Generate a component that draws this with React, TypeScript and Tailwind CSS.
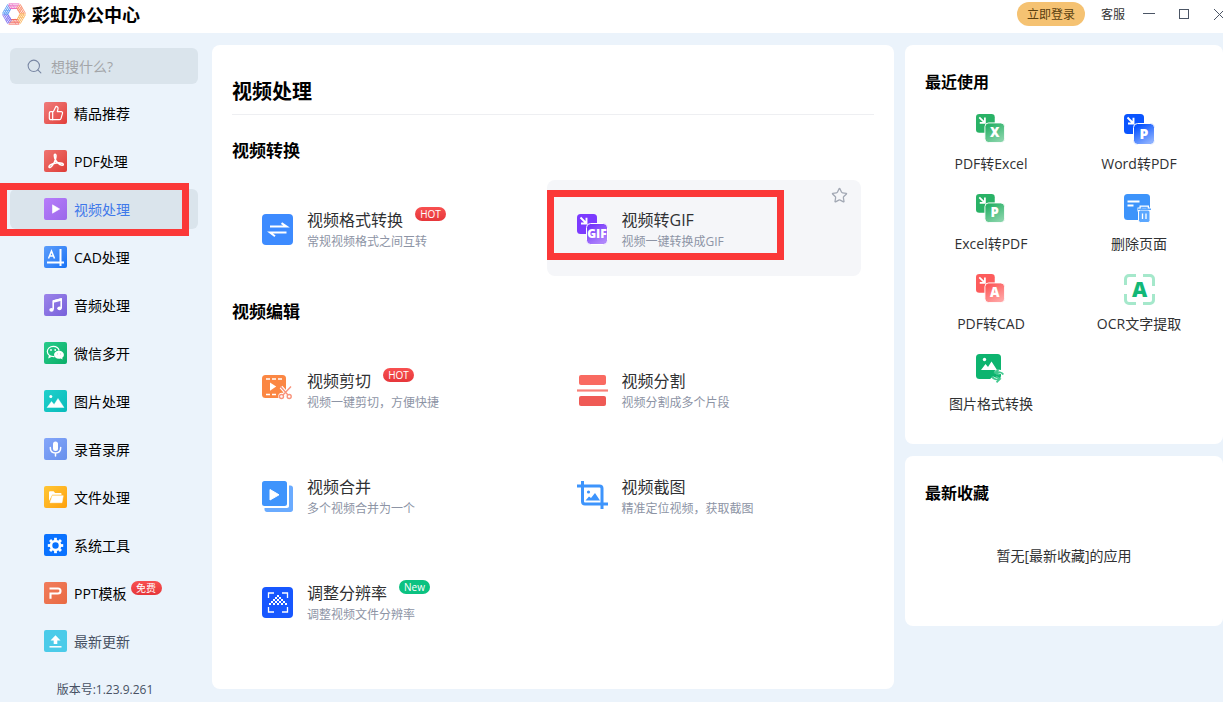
import type { ReactNode } from "react";
import { Search, Star, ThumbsUp } from "lucide-react";

/* ---------- Logo ---------- */

function Logo() {
  const sides = ["#f2695f", "#7f6ff0", "#5b9df5", "#e86fc4", "#f98a6a", "#fbb45c"];
  return (
    <svg width="24" height="24" viewBox="-12 -12 24 24" fill="none">
      {sides.map((color, index) => (
        <g key={color} transform={`rotate(${index * 60})`} stroke={color} strokeLinecap="round">
          <path d="M-3 5.5H4" strokeWidth="1" />
          <path d="M-3.5 7.1H5" strokeWidth="0.9" />
          <path d="M-4.5 8.7H5.5" strokeWidth="0.9" />
          <path d="M-5 10.2H4.6" strokeWidth="0.8" />
          <path d="M5 10.2L1.5 5M2 10.2L-1 5.5" strokeWidth="0.5" />
        </g>
      ))}
    </svg>
  );
}

/* ---------- Sidebar glyphs (23 x 22) ---------- */

function Glyph({ children }: { children: ReactNode }) {
  return (
    <svg width="23" height="22" viewBox="0 0 23 22" fill="none" stroke="white">
      {children}
    </svg>
  );
}

const pdfGlyph = (
  <Glyph>
    <path
      d="M11 4.2c1.6 0 1 3.2.4 5.2-.9 3-3.4 7.6-5.3 8-1.5.3-1.6-1.3.2-2.5 3-2 8.5-2.800 11.8-1.7 1.900.7 1.500 2.200-.1 2.100-3-.2-6.300-4-7.200-7C10.300 6.500 10 4.200 11 4.200z"
      strokeWidth="1.5"
      strokeLinejoin="round"
    />
  </Glyph>
);

const playGlyph = (
  <Glyph>
    <path d="M8.5 6.8v8.4L15.6 11z" fill="white" strokeWidth="0.6" strokeLinejoin="round" />
  </Glyph>
);

const cadGlyph = (
  <Glyph>
    <path d="M4.5 12.5L7.5 5l3 7.5M5.6 10h3.9" strokeWidth="1.5" />
    <path d="M3 16.5h17M16.5 3v17" strokeWidth="2" />
  </Glyph>
);

const musicGlyph = (
  <Glyph>
    <path d="M9.2 15.5V7l8-2v9" strokeWidth="1.6" />
    <path d="M9.2 7.5l8-2" strokeWidth="2.5" />
    <ellipse cx="7.5" cy="15.8" rx="2.2" ry="1.9" fill="white" stroke="none" />
    <ellipse cx="15.5" cy="14.3" rx="2.2" ry="1.9" fill="white" stroke="none" />
  </Glyph>
);

const wechatGlyph = (
  <Glyph>
    <path d="M5.5 13.5L5 15.6l2.6-1.3" strokeWidth="1.1" />
    <path d="M10.5 14.6c-4 .4-7.2-2-7.2-5C3.3 6.7 6 4.4 9.2 4.4c3 0 5.3 1.7 5.9 4.1" strokeWidth="1.2" />
    <circle cx="7" cy="8" r="0.9" fill="white" stroke="none" />
    <circle cx="11.2" cy="8" r="0.9" fill="white" stroke="none" />
    <path
      d="M15 8.7c-3 0-5 1.8-5 4s2 4.1 5 4.1c.6 0 1.2-.1 1.7-.3l1.9 1-.4-1.7c1.1-.8 1.7-1.9 1.7-3.1 0-2.2-2-4-4.9-4z"
      fill="white"
      stroke="none"
    />
    <circle cx="13.3" cy="11.9" r="0.4" fill="#12b877" stroke="none" />
    <circle cx="16.7" cy="11.9" r="0.4" fill="#12b877" stroke="none" />
  </Glyph>
);

const imageGlyph = (
  <Glyph>
    <circle cx="6.8" cy="6.5" r="1.5" fill="white" stroke="none" />
    <path d="M3 17.5L7.5 11.5l2.6 3L14 8.5l6 9z" fill="white" strokeWidth="0.4" strokeLinejoin="round" />
  </Glyph>
);

const micGlyph = (
  <Glyph>
    <rect x="9" y="3.5" width="5" height="9.5" rx="2.5" fill="white" stroke="none" />
    <path
      d="M6.3 9.5c0 3.5 2.2 5.5 5.2 5.5s5.2-2 5.2-5.5M11.5 15v3"
      strokeWidth="1.5"
      strokeLinecap="round"
    />
  </Glyph>
);

const folderGlyph = (
  <Glyph>
    <path
      d="M5 6.2c0-.6.4-.9.9-.9h3.7l1.5 1.6h5.4c.6 0 1 .4 1 .9v1H8.2L5 15z"
      fill="white"
      stroke="none"
    />
    <path d="M8.3 9.7h10.9l-1.2 7H6z" fill="white" strokeWidth="0.5" strokeLinejoin="round" />
  </Glyph>
);

const gearGlyph = (
  <Glyph>
    <circle cx="11.5" cy="11.5" r="4.5" strokeWidth="2.6" />
    {[0, 45, 90, 135, 180, 225, 270, 315].map((angle) => (
      <path key={angle} d="M11.5 6.5V3.8" strokeWidth="2.8" transform={`rotate(${angle} 11.5 11.5)`} />
    ))}
  </Glyph>
);

const pptGlyph = (
  <Glyph>
    <path d="M5.5 6.5h8.5c2 0 2.5 1 2.500 2.500s-.7 2.500-2.500 2.500H6.500v5.300" strokeWidth="2.100" />
  </Glyph>
);

const uploadGlyph = (
  <Glyph>
    <path d="M11.5 5.2L6.5 10.500h3.200V14h3.600v-3.500h3.200z" fill="white" stroke="none" />
    <path d="M5.5 16.800h12" strokeWidth="1.500" />
  </Glyph>
);

/* ---------- Tool icons (32 x 32) ---------- */

type DuoProps = {
  id: string;
  back: string;
  front: string;
  light: string;
  label: string;
  size?: number;
};

function DuoIcon({ id, back, front, light, label, size = 32 }: DuoProps) {
  const wide = label.length > 1;
  return (
    <svg width={size} height={size} viewBox="0 0 32 32" fill="none">
      <defs>
        <linearGradient id={id} x1="0" y1="0" x2="0.6" y2="1">
          <stop offset="0.2" stopColor={front} />
          <stop offset="1" stopColor={light} />
        </linearGradient>
      </defs>
      <rect x="0" y="0" width="20" height="20" rx="3.5" fill={back} />
      <path d="M3.5 3.5l5.500 5.500M9.500 3.800v5.700H4" stroke="white" strokeWidth="1.900" />
      <rect x="9.500" y="9.500" width="21" height="21" rx="4" fill={`url(#${id})`} stroke="white" />
      <text
        x="20"
        y={wide ? 24 : 25}
        textAnchor="middle"
        fill="white"
        fontFamily="Open Sans, sans-serif"
        fontWeight="800"
        fontSize={wide ? 12 : 14}
      >
        {label}
      </text>
    </svg>
  );
}

function FormatIcon() {
  return (
    <svg width="32" height="32" viewBox="0 0 32 32" fill="none">
      <rect width="31" height="31" rx="4" fill="#3d8bff" />
      <path d="M8 12.500h16.500L19.500 9.200M24.500 18.500H8l5 3.800" stroke="white" strokeWidth="2" />
    </svg>
  );
}

function CutIcon() {
  return (
    <svg width="32" height="32" viewBox="0 0 32 32" fill="none">
      <rect width="24" height="23" rx="3.500" fill="#fb8743" />
      <path d="M4 4h4M10 4h4M16 4h4M4 19.500h4M10 19.500h4" stroke="white" strokeWidth="1.500" />
      <path d="M8 7.500v8.200l6.200-4.100z" fill="white" />
      <g stroke="white" strokeWidth="3.500">
        <path d="M19 12l7.500 8.500M29 12l-8 8.500" />
        <circle cx="20" cy="21.500" r="2" />
        <circle cx="27" cy="21.500" r="2" />
      </g>
      <g stroke="#f9937b" strokeWidth="1.400">
        <path d="M18.500 11.500l7.500 8.500M29 11.500l-8 8.500" />
        <circle cx="19.500" cy="21.500" r="2" />
        <circle cx="27.200" cy="21.500" r="2" />
      </g>
    </svg>
  );
}

function SplitIcon() {
  return (
    <svg width="32" height="32" viewBox="0 0 32 32" fill="none">
      <rect x="2" y="0" width="27" height="10" rx="2" fill="#f96a61" />
      <path d="M0 15.500h31" stroke="#f98078" strokeWidth="2.200" />
      <rect x="2" y="21" width="27" height="10" rx="2" fill="#ef5a55" />
    </svg>
  );
}

function MergeIcon() {
  return (
    <svg width="32" height="32" viewBox="0 0 32 32" fill="none">
      <path
        d="M27 4.500h1.500c1.500 0 2.500 1 2.500 2.500v21.500c0 1.500-1 2.500-2.500 2.500H5c-1.500 0-2.500-1-2.500-2.500V27H25c1.300 0 2-.7 2-2z"
        fill="#6aabff"
      />
      <rect width="25" height="25" rx="2.500" fill="#3f94fc" />
      <path d="M8 8.500v10.500l9-5.200z" fill="white" stroke="white" strokeLinejoin="round" />
    </svg>
  );
}

function CropIcon() {
  return (
    <svg width="32" height="32" viewBox="0 0 32 32" fill="none">
      <path
        d="M0 5h22.500c1.500 0 2.500 1 2.500 2.500V28M5.500 0v20.500c0 1.500 1 2.500 2.500 2.500h23"
        stroke="#3d94fc"
        strokeWidth="3"
      />
      <circle cx="11.500" cy="11" r="1.600" fill="#3d94fc" />
      <path d="M8.500 19.500l3.500-4 2 1.500 4-5 5 7.500z" fill="#3d94fc" />
    </svg>
  );
}

function ResolutionIcon() {
  return (
    <svg width="32" height="32" viewBox="0 0 32 32" fill="none">
      <rect width="31" height="31" rx="4" fill="#1757ff" />
      <path d="M6.500 11V6H12M20 6h5.500v5M6.500 20v5H12M20 25h5.500v-5" stroke="white" strokeWidth="1.300" />
      <path d="M15 9h2M13 11h6M11 13h10M9 15h14M7 17h18" stroke="white" strokeWidth="2" strokeDasharray="2 2" />
    </svg>
  );
}

function DeletePageIcon() {
  return (
    <svg width="30" height="30" viewBox="0 0 30 30" fill="none">
      <rect width="26" height="26" rx="3.500" fill="#3d94fb" />
      <path d="M3.500 7.500h12M3.500 11.500h6" stroke="white" strokeWidth="2" />
      <path d="M13.500 15.500h13.500M17.500 15v-1.500h5.500V15" stroke="white" strokeWidth="4" />
      <rect x="14.500" y="16" width="11.500" height="12.500" rx="2" fill="#5ba7ff" stroke="white" />
      <path d="M14 15.200h13M17.500 15v-1.500h5.500V15" stroke="#5ba7ff" strokeWidth="1.500" />
      <path d="M18.500 19.500v5.500M22 19.500v5.500" stroke="white" strokeWidth="1.300" />
    </svg>
  );
}

function OcrIcon() {
  return (
    <svg width="32" height="32" viewBox="0 0 32 32" fill="none">
      <path
        d="M1.500 11V5c0-2 1.500-3.500 3.500-3.500h7M19 1.500h7c2 0 3.500 1.500 3.500 3.500v7M29.500 20v6c0 2-1.500 3.500-3.500 3.500h-7M12 29.500H5c-2 0-3.500-1.500-3.500-3.500v-6"
        stroke="#a5e8cb"
        strokeWidth="3"
      />
      <text
        x="15.500"
        y="23"
        textAnchor="middle"
        fill="#12b877"
        fontFamily="Open Sans, sans-serif"
        fontWeight="800"
        fontSize="21"
      >
        A
      </text>
    </svg>
  );
}

function ImageConvertIcon() {
  return (
    <svg width="32" height="32" viewBox="0 0 32 32" fill="none">
      <rect width="25" height="25" rx="3.500" fill="#0db46f" />
      <circle cx="8.500" cy="5.500" r="1.700" fill="white" />
      <path d="M5 16l4.500-6 2.500 3 3.500-5.500L21 16z" fill="white" />
      <path d="M27 19.500c-1.500-2-5-2.500-7.500-.8M16 23.500c1.500 2.300 5 2.800 7.500 1.200" stroke="white" strokeWidth="4" />
      <path
        d="M27.300 20.500c-1.300-2.400-4.800-3-8-1.500M22.500 15.500l-3.500 3.300 4.500 2M16 22.500c1.300 2.600 4.800 3.600 8 2.500M20.500 28.300l3.500-3.300-4-2.500"
        stroke="#41c98f"
        strokeWidth="1.800"
      />
    </svg>
  );
}

/* ---------- Data ---------- */

const navItems = [
  { label: "精品推荐", tile: "from-[#ef7b7b] to-[#e23c39]", icon: <ThumbsUp size={16} strokeWidth={1.8} /> },
  { label: "PDF处理", tile: "from-[#ef7370] to-[#de3a36]", icon: pdfGlyph },
  { label: "视频处理", tile: "from-[#b77cfb] to-[#9b69ea]", icon: playGlyph, active: true },
  { label: "CAD处理", tile: "from-[#5b9dfb] to-[#1673f5]", icon: cadGlyph },
  { label: "音频处理", tile: "from-[#9c84ea] to-[#7860da]", icon: musicGlyph },
  { label: "微信多开", tile: "from-[#26cb8b] to-[#08ae68]", icon: wechatGlyph },
  { label: "图片处理", tile: "from-[#1fd0cb] to-[#06bbbb]", icon: imageGlyph },
  { label: "录音录屏", tile: "from-[#84a6fa] to-[#6790ec]", icon: micGlyph },
  { label: "文件处理", tile: "from-[#ffc633] to-[#ffa108]", icon: folderGlyph },
  { label: "系统工具", tile: "from-[#0a72ff] to-[#0a72ff]", icon: gearGlyph },
  { label: "PPT模板", tile: "from-[#f17c5c] to-[#e96a42]", icon: pptGlyph, badge: "免费" },
  { label: "最新更新", tile: "from-[#4bcbe9] to-[#4bcbe9]", icon: uploadGlyph, muted: true },
];

type Tool = {
  title: string;
  desc: string;
  icon: ReactNode;
  badge?: string;
  highlighted?: boolean;
};

const sections: { title: string; tools: Tool[] }[] = [
  {
    title: "视频转换",
    tools: [
      { title: "视频格式转换", desc: "常规视频格式之间互转", icon: <FormatIcon />, badge: "HOT" },
      {
        title: "视频转GIF",
        desc: "视频一键转换成GIF",
        icon: <DuoIcon id="gif" back="#7c3aff" front="#7838fa" light="#b087fb" label="GIF" />,
        highlighted: true,
      },
    ],
  },
  {
    title: "视频编辑",
    tools: [
      { title: "视频剪切", desc: "视频一键剪切，方便快捷", icon: <CutIcon />, badge: "HOT" },
      { title: "视频分割", desc: "视频分割成多个片段", icon: <SplitIcon /> },
      { title: "视频合并", desc: "多个视频合并为一个", icon: <MergeIcon /> },
      { title: "视频截图", desc: "精准定位视频，获取截图", icon: <CropIcon /> },
      { title: "调整分辨率", desc: "调整视频文件分辨率", icon: <ResolutionIcon />, badge: "New" },
    ],
  },
];

const recents = [
  {
    label: "PDF转Excel",
    icon: <DuoIcon id="xls" back="#29b266" front="#2bb268" light="#86d3a8" label="X" size={30} />,
  },
  {
    label: "Word转PDF",
    icon: <DuoIcon id="word" back="#0a55ff" front="#0a55ff" light="#8aafff" label="P" />,
  },
  {
    label: "Excel转PDF",
    icon: <DuoIcon id="pdf" back="#29b266" front="#2bb268" light="#86d3a8" label="P" size={30} />,
  },
  { label: "删除页面", icon: <DeletePageIcon /> },
  {
    label: "PDF转CAD",
    icon: <DuoIcon id="cad" back="#fd5c5c" front="#fd5c5c" light="#ffa3a3" label="A" size={30} />,
  },
  { label: "OCR文字提取", icon: <OcrIcon /> },
  { label: "图片格式转换", icon: <ImageConvertIcon /> },
];

/* ---------- Parts ---------- */

function Badge({ text }: { text: string }) {
  return (
    <span
      className={`-mt-px flex h-[14px] w-[31px] shrink-0 items-center justify-center rounded-full text-[10px] leading-[14px] text-white ${
        text === "New" ? "bg-[#0bc281]" : "bg-linear-to-b from-[#f85050] to-[#e6363a]"
      }`}
    >
      {text}
    </span>
  );
}

function TitleBar() {
  return (
    <header className="flex h-[33px] items-start justify-between bg-white pl-[2px]">
      <div className="flex h-7 items-center gap-[6px]">
        <Logo />
        <h1 className="pt-0.5 text-lg leading-6 font-bold text-black">彩虹办公中心</h1>
      </div>
      <div className="flex h-7 items-center text-xs text-[#333]">
        <button className="h-6 w-[68px] rounded-full bg-[#f5c272] pt-0.5 text-[#5a4010]">立即登录</button>
        <button className="ml-4 pt-0.5">客服</button>
        <button aria-label="最小化" className="ml-[18px]">
          <svg width="12" height="12" viewBox="0 0 12 12">
            <path d="M0 5.500h12" stroke="#4b5565" />
          </svg>
        </button>
        <button aria-label="最大化" className="ml-6">
          <svg width="10" height="10" viewBox="0 0 10 10">
            <rect x="0.500" y="0.500" width="9" height="9" fill="none" stroke="#4b5565" />
          </svg>
        </button>
        <button aria-label="关闭" className="ml-[25px]">
          <svg width="9" height="11" viewBox="0 0 9 11">
            <path d="M0 0l11 11M11 0L0 11" stroke="#4b5565" />
          </svg>
        </button>
      </div>
    </header>
  );
}

function Sidebar() {
  return (
    <aside className="w-[212px] shrink-0 pt-[3px] pr-[14px] pl-[10px]">
      <label className="flex h-9 items-center gap-2 rounded-md bg-[#dae4ec] pl-4">
        <Search size={17} strokeWidth={1.5} className="shrink-0 text-[#7886a3]" />
        <input
          type="text"
          aria-label="搜索"
          placeholder="想搜什么?"
          className="w-full min-w-0 bg-transparent pt-0.5 text-sm outline-none placeholder:text-[#a3a5a8]"
        />
      </label>

      <nav className="mt-[9px] flex flex-col gap-2">
        {navItems.map((item) => (
          <a
            key={item.label}
            href="#"
            className={`relative flex h-10 items-center rounded-md pl-[34px] text-sm ${
              item.active ? "bg-[#dae4ec] text-[#3f78ea]" : item.muted ? "text-[#475163]" : "text-black"
            }`}
          >
            <span
              className={`mr-[7px] flex h-[22px] w-[23px] items-center justify-center rounded-[2px] bg-linear-to-br text-white ${item.tile}`}
            >
              {item.icon}
            </span>
            <span className="pt-0.5">{item.label}</span>
            {item.badge && (
              <span className="mb-[9px] ml-1">
                <Badge text={item.badge} />
              </span>
            )}
            {item.active && (
              <span className="pointer-events-none absolute -top-[6px] -left-[10px] h-[53px] w-[189px] border-[7px] border-[#fb3838]" />
            )}
          </a>
        ))}
      </nav>

      <p className="mt-[21px] pl-0.5 text-center text-xs text-[#475163]">版本号:1.23.9.261</p>
    </aside>
  );
}

function ToolCard({ tool }: { tool: Tool }) {
  return (
    <article
      className={`relative flex h-24 items-center rounded-lg pl-[30px] ${tool.highlighted ? "bg-[#f5f6f9]" : ""}`}
    >
      <a href="#" className="flex items-center gap-[13px]">
        <span className="mt-[3px] shrink-0">{tool.icon}</span>
        <span className="flex flex-col pt-1">
          <span className="flex gap-3 text-base leading-6 text-[#303133]">
            {tool.title}
            {tool.badge && <Badge text={tool.badge} />}
          </span>
          <span className="text-xs leading-5 text-[#8d94a5]">{tool.desc}</span>
        </span>
      </a>
      {tool.highlighted && (
        <>
          <button aria-label="收藏" className="absolute top-[7px] right-[13px] text-[#a2a8b4]">
            <Star size={17} strokeWidth={1.8} />
          </button>
          <span className="pointer-events-none absolute top-[10px] left-0 h-[70px] w-[237px] border-[7px] border-[#fb3838]" />
        </>
      )}
    </article>
  );
}

export default function App() {
  return (
    <div className="min-h-screen bg-[#ebf3fb] font-['Open_Sans','Noto_Sans_CJK_SC',sans-serif]">
      <TitleBar />
      <div className="flex pt-3">
        <Sidebar />

        {/* Tool list */}
        <main className="mr-[11px] mb-[13px] min-w-0 flex-1 rounded-lg bg-white px-5 pt-[33px] pb-10">
          <h2 className="border-b border-[#eeeff2] pb-2 text-xl leading-7 font-bold text-black">视频处理</h2>
          {sections.map((section) => (
            <section key={section.title} className="mt-6">
              <h3 className="text-[17px] leading-6 font-bold text-black">{section.title}</h3>
              <div className="mt-[17px] mr-[13px] grid grid-cols-2 gap-y-[10px]">
                {section.tools.map((tool) => (
                  <ToolCard key={tool.title} tool={tool} />
                ))}
              </div>
            </section>
          ))}
        </main>

        {/* Recent and favourite apps */}
        <div className="flex w-[318px] shrink-0 flex-col gap-3">
          <section className="rounded-lg bg-white pt-[25px] pb-[10px]">
            <h3 className="px-5 text-base leading-6 font-bold text-black">最近使用</h3>
            <div className="mt-5 mr-[10px] ml-3 grid grid-cols-2">
              {recents.map((item) => (
                <a
                  key={item.label}
                  href="#"
                  className="flex h-20 flex-col items-center gap-2 text-sm text-[#303133]"
                >
                  <span className="h-8 w-[30px]">{item.icon}</span>
                  {item.label}
                </a>
              ))}
            </div>
          </section>
          <section className="rounded-lg bg-white pt-[25px] pb-[60px]">
            <h3 className="px-5 text-base leading-6 font-bold text-black">最新收藏</h3>
            <p className="mt-[41px] text-center text-sm text-[#303133]">暂无[最新收藏]的应用</p>
          </section>
        </div>
      </div>
    </div>
  );
}
